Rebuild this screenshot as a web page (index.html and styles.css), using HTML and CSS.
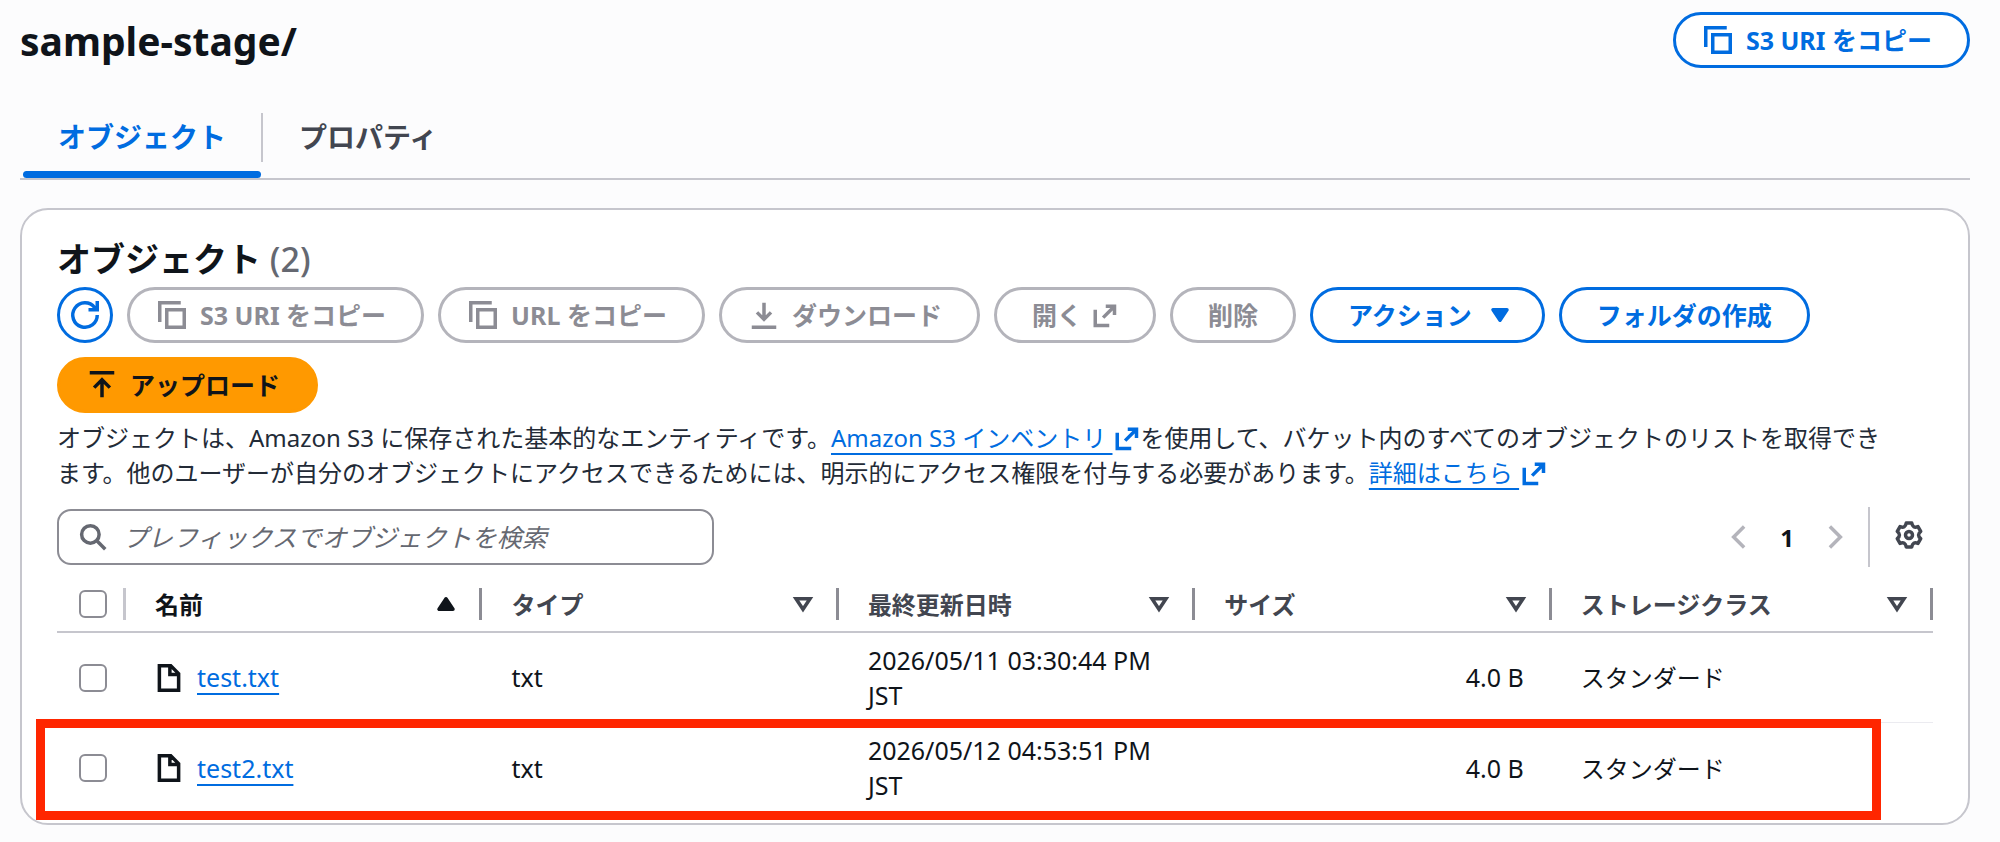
FILE: index.html
```
<!DOCTYPE html>
<html lang="ja">
<head>
  <meta charset="UTF-8">
  <meta name="viewport" content="width=device-width, initial-scale=1.0">
  <title>sample-stage/</title>
  <link rel="stylesheet" href="styles.css">
</head>
<body>
  <!-- Shared icons -->
  <svg class="sprite" aria-hidden="true">
    <symbol id="i-copy" viewBox="0 0 16 16"><path d="M1 12V1h12M5 5h10v10H5z"/></symbol>
    <symbol id="i-external" viewBox="0 0 16 16"><path d="M9 3h5v5M14 3L7.500 9.500M3 5v9h8"/></symbol>
    <symbol id="i-sort" viewBox="0 0 16 16"><path d="M4 5h8l-4 6z"/></symbol>
    <symbol id="i-file" viewBox="0 0 16 16"><path d="M2.500 1h6.500l4.500 4.500V15h-11zM8.500 1v5h5"/></symbol>
  </svg>

  <div class="page">
    <header class="page-header">
      <h1>sample-stage/</h1>
      <button class="btn" type="button"><svg class="icon icon-left"><use href="#i-copy"/></svg>S3 URI をコピー</button>
    </header>

    <nav class="tabs">
      <a class="tab active" href="#objects">オブジェクト</a>
      <a class="tab" href="#properties">プロパティ</a>
    </nav>

    <main class="card" id="objects">
      <h2>オブジェクト <span class="count">(2)</span></h2>

      <div class="actions">
        <button class="btn btn-round" type="button" aria-label="更新"><svg class="icon" viewBox="0 0 16 16"><path d="M15 8a7 7 0 1 1-1.500-4.300L15 5M10 5h5V0"/></svg></button>
        <button class="btn" type="button" disabled><svg class="icon icon-left"><use href="#i-copy"/></svg>S3 URI をコピー</button>
        <button class="btn" type="button" disabled><svg class="icon icon-left"><use href="#i-copy"/></svg>URL をコピー</button>
        <button class="btn" type="button" disabled><svg class="icon icon-left" viewBox="0 0 16 16"><path d="M8 1v9.500M4 6.500l4 4 4-4M1 15h14"/></svg>ダウンロード</button>
        <button class="btn" type="button" disabled>開く<svg class="icon icon-ext"><use href="#i-external"/></svg></button>
        <button class="btn" type="button" disabled>削除</button>
        <button class="btn" type="button">アクション<svg class="icon icon-right icon-solid"><use href="#i-sort"/></svg></button>
        <button class="btn" type="button">フォルダの作成</button>
        <button class="btn btn-primary" type="button"><svg class="icon icon-left" viewBox="0 0 16 16"><path d="M1 1h14M8 15V5M3.500 9.500L8 5l4.500 4.500"/></svg>アップロード</button>
      </div>

      <p class="description">オブジェクトは、Amazon S3 に保存された基本的なエンティティです。<a href="#inventory">Amazon S3 インベントリ&nbsp;</a><svg class="icon link-icon"><use href="#i-external"/></svg>を使用して、バケット内のすべてのオブジェクトのリストを取得でき<br>ます。他のユーザーが自分のオブジェクトにアクセスできるためには、明示的にアクセス権限を付与する必要があります。<a href="#more">詳細はこちら&nbsp;</a><svg class="icon link-icon"><use href="#i-external"/></svg></p>

      <div class="tools">
        <label class="search">
          <svg class="icon" viewBox="0 0 16 16"><circle cx="6.500" cy="6.500" r="5"/><path d="M10.200 10.200L15 15"/></svg>
          <input type="text" placeholder="プレフィックスでオブジェクトを検索" aria-label="プレフィックスでオブジェクトを検索">
        </label>
        <div class="pagination">
          <button class="icon-btn muted" type="button" aria-label="前のページ" disabled><svg class="icon" viewBox="0 0 16 16"><path d="M11.500 2l-6 6 6 6"/></svg></button>
          <button class="page-number" type="button">1</button>
          <button class="icon-btn muted" type="button" aria-label="次のページ" disabled><svg class="icon" viewBox="0 0 16 16"><path d="M4.500 2l6 6-6 6"/></svg></button>
        </div>
        <div class="settings">
          <button class="icon-btn" type="button" aria-label="設定"><svg class="icon icon-gear" viewBox="0 0 16 16"><path d="M6.430 1.180H9.570Q10.100 4.360 13.120 3.230L14.690 5.950Q12.200 8 14.690 10.050L13.120 12.770Q10.100 11.640 9.570 14.820H6.430Q5.900 11.640 2.880 12.770L1.310 10.050Q3.800 8 1.310 5.950L2.880 3.230Q5.900 4.360 6.430 1.180z"/><circle cx="8" cy="8" r="2"/></svg></button>
        </div>
      </div>

      <div class="table-wrap">
        <table>
          <thead>
            <tr>
              <th class="check"><div><input type="checkbox" aria-label="すべて選択"></div></th>
              <th class="col sorted"><div>名前<svg class="icon icon-solid" viewBox="0 0 16 16"><path d="M4 11h8L8 5z"/></svg></div></th>
              <th class="col"><div>タイプ<svg class="icon"><use href="#i-sort"/></svg></div></th>
              <th class="col"><div>最終更新日時<svg class="icon"><use href="#i-sort"/></svg></div></th>
              <th class="col"><div>サイズ<svg class="icon"><use href="#i-sort"/></svg></div></th>
              <th><div>ストレージクラス<svg class="icon"><use href="#i-sort"/></svg></div></th>
            </tr>
          </thead>
          <tbody>
            <tr>
              <td class="check"><input type="checkbox" aria-label="test.txt を選択"></td>
              <td><div class="file"><svg class="icon"><use href="#i-file"/></svg><a href="#test">test.txt</a></div></td>
              <td>txt</td>
              <td>2026/05/11 03:30:44 PM JST</td>
              <td class="size">4.0 B</td>
              <td class="storage">スタンダード</td>
            </tr>
            <tr>
              <td class="check"><input type="checkbox" aria-label="test2.txt を選択"></td>
              <td><div class="file"><svg class="icon"><use href="#i-file"/></svg><a href="#test2">test2.txt</a></div></td>
              <td>txt</td>
              <td>2026/05/12 04:53:51 PM JST</td>
              <td class="size">4.0 B</td>
              <td class="storage">スタンダード</td>
            </tr>
          </tbody>
        </table>
        <div class="highlight"></div>
      </div>
    </main>
  </div>
</body>
</html>
```
FILE: styles.css
```
* { box-sizing: border-box; }
body { margin: 0; background: #fcfcfd; color: #0f141a; font-family: "Noto Sans", "Noto Sans CJK JP", sans-serif; font-size: 24px; line-height: 35px; }
button, input { font: inherit; color: inherit; margin: 0; }
a { color: #006ce0; text-decoration: underline; text-decoration-thickness: 2px; text-underline-offset: 6px; text-decoration-skip-ink: none; }
.page { padding: 12px 30px 12px 20px; }

/* Icons */
.sprite { position: absolute; width: 0; height: 0; }
.icon { width: 28px; height: 28px; flex: none; fill: none; stroke: currentColor; stroke-width: 2; overflow: visible; }
.icon-left { margin: 0 14px 0 -7px; }
.icon-right { margin: 0 -7px 0 14px; }
.icon-ext { margin-left: 8px; }
.icon-solid { fill: currentColor; stroke-linejoin: round; }
.icon-gear { stroke-linejoin: round; }
.link-icon { color: #006ce0; vertical-align: -5px; }

/* Header and tabs */
.page-header { display: flex; justify-content: space-between; align-items: center; }
h1 { margin: 0; padding-top: 2px; font-size: 39px; line-height: 54px; font-weight: 700; }
.tabs { display: flex; margin-top: 45px; border-bottom: 2px solid #c6c6cd; }
.tab { position: relative; margin-left: 3px; padding: 0 35px 17px; height: 65px; font-size: 28px; line-height: 48px; font-weight: 700; color: #424650; text-decoration: none; }
.tab.active { color: #006ce0; }
.tab.active::before { content: ""; position: absolute; right: -2px; top: 0; width: 2px; height: 49px; background: #c6c6cd; }
.tab.active::after { content: ""; position: absolute; left: 0; right: 0; bottom: 0; height: 7px; border-radius: 4px; background: #006ce0; }

/* Buttons */
.btn { display: inline-flex; align-items: center; justify-content: center; height: 56px; padding: 0 35px; border: 3px solid #006ce0; border-radius: 28px; background: #fff; color: #006ce0; font-size: 25px; font-weight: 700; white-space: nowrap; }
.btn:disabled { border-color: #b4b4bb; color: #8c8c94; }
.btn-round { width: 56px; padding: 0; }
.btn-primary { border-color: #ff9900; background: #ff9900; color: #0f141a; }
.icon-btn { display: flex; padding: 0; border: 0; background: none; color: #424650; }
.icon-btn.muted { color: #b4b4bb; }

/* Objects card */
.card { margin-top: 28px; padding: 25px 35px 10px; border: 2px solid #c6c6cd; border-radius: 28px; background: #fff; }
h2 { margin: 0; font-size: 34px; line-height: 48px; font-weight: 700; }
.count { font-weight: 500; color: #656871; }
.actions { display: flex; flex-wrap: wrap; gap: 14px; margin-top: 4px; }
.description { margin: 7px 0 0; color: #232b37; }

/* Search and paging */
.tools { display: flex; align-items: center; margin-top: 17px; }
.search { display: flex; align-items: center; width: 35%; height: 56px; padding: 0 20px; border: 2px solid #8c8c94; border-radius: 14px; color: #656871; font-size: 25px; }
.search input { flex: 1; min-width: 0; margin-left: 16px; padding: 0; border: 0; outline: 0; background: none; }
.search input::placeholder { color: #656871; font-style: italic; opacity: 1; }
.pagination { display: flex; align-items: center; gap: 28px; margin-left: auto; }
.page-number { padding: 0; border: 0; background: none; color: #0f141a; font-weight: 700; }
.settings { display: flex; align-items: center; height: 60px; margin-left: 18px; padding: 0 10px 4px 25px; border-left: 2px solid #c6c6cd; }

/* Table */
.table-wrap { position: relative; margin-top: 10px; }
table { width: 100%; border-collapse: separate; border-spacing: 0; table-layout: fixed; }
th { height: 56px; padding: 0; border-bottom: 2px solid #c6c6cd; color: #424650; text-align: left; }
th div { display: flex; align-items: center; justify-content: space-between; height: 32px; padding: 0 19px 0 29px; border-right: 3px solid #8c8c94; }
.col { width: 19%; }
.sorted { color: #0f141a; }
td { height: 90px; padding: 9px 28px 9px 29px; font-size: 25px; }
tbody tr:first-child td { border-bottom: 1px solid #ebebf0; }
.check { width: 69px; padding: 0 0 0 22px; }
th.check { padding: 0; }
th.check div { padding: 0 0 0 22px; border-color: #c6c6cd; }
.size { text-align: right; }
.storage { font-size: 24px; }
input[type="checkbox"] { display: block; appearance: none; width: 28px; height: 28px; border: 2px solid #8c8c94; border-radius: 6px; background: #fff; }
.file { display: flex; align-items: center; gap: 14px; }
.highlight { position: absolute; left: -21px; right: 52px; bottom: -7px; height: 101px; border: 9px solid #ff2600; pointer-events: none; }
```
